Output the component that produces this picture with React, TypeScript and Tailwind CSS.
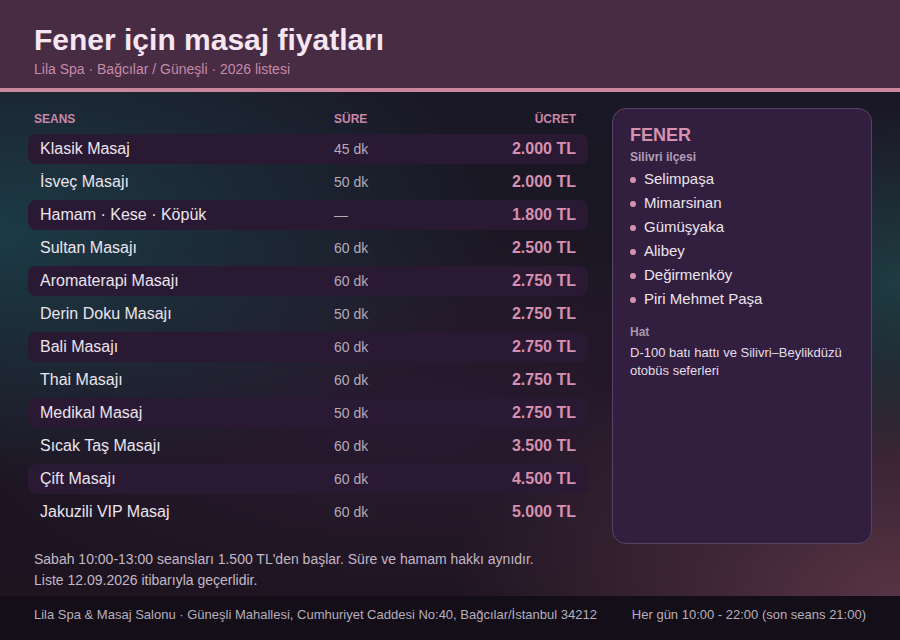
const rows = [
  { name: "Klasik Masaj", dur: "45 dk", price: "2.000 TL" },
  { name: "İsveç Masajı", dur: "50 dk", price: "2.000 TL" },
  { name: "Hamam · Kese · Köpük", dur: "—", price: "1.800 TL" },
  { name: "Sultan Masajı", dur: "60 dk", price: "2.500 TL" },
  { name: "Aromaterapi Masajı", dur: "60 dk", price: "2.750 TL" },
  { name: "Derin Doku Masajı", dur: "50 dk", price: "2.750 TL" },
  { name: "Bali Masajı", dur: "60 dk", price: "2.750 TL" },
  { name: "Thai Masajı", dur: "60 dk", price: "2.750 TL" },
  { name: "Medikal Masaj", dur: "50 dk", price: "2.750 TL" },
  { name: "Sıcak Taş Masajı", dur: "60 dk", price: "3.500 TL" },
  { name: "Çift Masajı", dur: "60 dk", price: "4.500 TL" },
  { name: "Jakuzili VIP Masaj", dur: "60 dk", price: "5.000 TL" },
]

const areas = ["Selimpaşa", "Mimarsinan", "Gümüşyaka", "Alibey", "Değirmenköy", "Piri Mehmet Paşa"]

export default function App() {
  return (
    <div className="w-[900px] h-[640px] flex flex-col overflow-hidden font-['Liberation_Sans',Arial,sans-serif] bg-[#1c1522]">
      {/* header */}
      <header className="h-[92px] shrink-0 bg-[#482c44] border-b-4 border-[#c9869d] px-[34px] pt-[23px]">
        <h1 className="text-[30px] leading-[34px] font-bold text-[#f7e6f2]">Fener için masaj fiyatları</h1>
        <p className="mt-[2px] text-[14px] leading-[20px] text-[#c68aaa]">Lila Spa · Bağcılar / Güneşli · 2026 listesi</p>
      </header>

      {/* body */}
      <main className="flex-1 flex gap-[24px] px-[28px] pt-[16px] bg-[radial-gradient(ellipse_55%_50%_at_0%_28%,#1c3b45_0%,transparent_100%),radial-gradient(ellipse_22%_35%_at_100%_38%,#1f3c42_0%,transparent_100%),radial-gradient(ellipse_50%_55%_at_100%_100%,#583444_0%,transparent_100%),radial-gradient(ellipse_50%_40%_at_45%_65%,#2a1a30_0%,transparent_100%),linear-gradient(#1a1826,#1d1420)]">
        <section className="w-[560px] shrink-0 pt-[3px]">
          <div className="grid grid-cols-[300px_1fr_auto] pl-[6px] pr-[12px] text-[12px] leading-[16px] font-bold text-[#c987a8]">
            <span>SEANS</span>
            <span>SÜRE</span>
            <span>ÜCRET</span>
          </div>
          <div className="mt-[7px] flex flex-col gap-[3px]">
            {rows.map((r, i) => (
              <div
                key={r.name}
                className={`h-[30px] grid grid-cols-[294px_1fr_auto] items-center pl-[12px] pr-[12px] rounded-lg ${i % 2 === 0 ? "bg-[#2a1932]" : ""}`}
              >
                <span className="text-[16px] text-[#ece4ee]">{r.name}</span>
                <span className="text-[14px] text-[#b4aab8]">{r.dur}</span>
                <span className="text-[16px] font-bold text-[#d690b0]">{r.price}</span>
              </div>
            ))}
          </div>
          <div className="mt-[22px] pl-[6px] text-[14px] leading-[21px] text-[#c3b8c6]">
            <p>Sabah 10:00-13:00 seansları 1.500 TL'den başlar. Süre ve hamam hakkı aynıdır.</p>
            <p>Liste 12.09.2026 itibarıyla geçerlidir.</p>
          </div>
        </section>

        <aside className="w-[260px] h-[436px] shrink-0 rounded-[14px] bg-[#321f3f] border border-[#5a4264] px-[17px] pt-[16px]">
          <h2 className="text-[18px] leading-[20px] font-bold text-[#d690b0]">FENER</h2>
          <p className="mt-[4px] text-[12px] leading-[16px] font-bold text-[#b49db6]">Silivri ilçesi</p>
          <ul className="mt-[2px]">
            {areas.map((a) => (
              <li key={a} className="h-[24px] flex items-center gap-[8px] text-[15px] text-[#ece4ee]">
                <span className="w-[6px] h-[6px] rounded-full bg-[#d690b0] mt-[2px]" />
                {a}
              </li>
            ))}
          </ul>
          <p className="mt-[13px] text-[12px] leading-[16px] font-bold text-[#a896ab]">Hat</p>
          <p className="mt-[4px] text-[13px] leading-[18px] text-[#e6dde8]">D-100 batı hattı ve Silivri–Beylikdüzü otobüs seferleri</p>
        </aside>
      </main>

      {/* footer */}
      <footer className="h-[44px] shrink-0 bg-[#130e18] px-[34px] pt-[10px] flex justify-between text-[13px] leading-[18px] text-[#b8aebc]">
        <span>Lila Spa &amp; Masaj Salonu · Güneşli Mahallesi, Cumhuriyet Caddesi No:40, Bağcılar/İstanbul 34212</span>
        <span>Her gün 10:00 - 22:00 (son seans 21:00)</span>
      </footer>
    </div>
  )
}
